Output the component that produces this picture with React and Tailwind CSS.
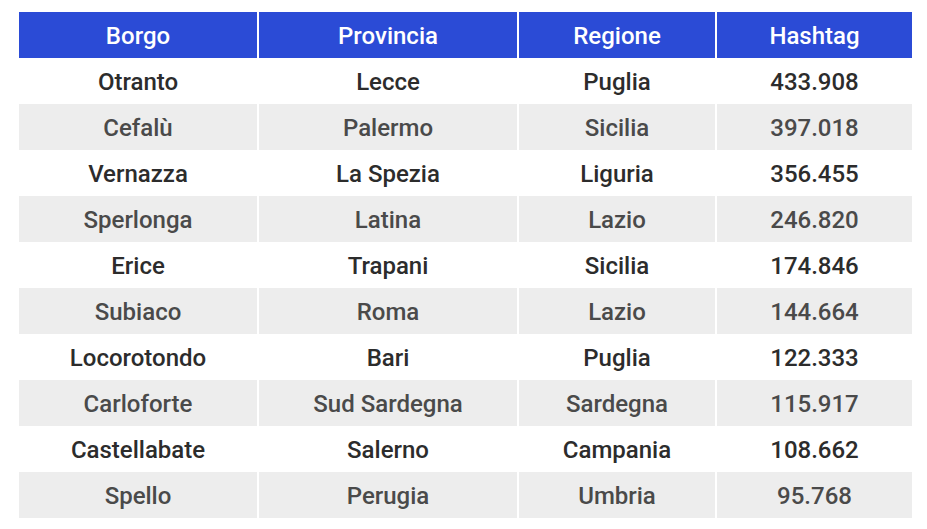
import React from 'react';

const rows = [
  ['Otranto', 'Lecce', 'Puglia', '433.908'],
  ['Cefalù', 'Palermo', 'Sicilia', '397.018'],
  ['Vernazza', 'La Spezia', 'Liguria', '356.455'],
  ['Sperlonga', 'Latina', 'Lazio', '246.820'],
  ['Erice', 'Trapani', 'Sicilia', '174.846'],
  ['Subiaco', 'Roma', 'Lazio', '144.664'],
  ['Locorotondo', 'Bari', 'Puglia', '122.333'],
  ['Carloforte', 'Sud Sardegna', 'Sardegna', '115.917'],
  ['Castellabate', 'Salerno', 'Campania', '108.662'],
  ['Spello', 'Perugia', 'Umbria', '95.768'],
];

const cols = ['w-[238px]', 'w-[258px]', 'w-[196px]', 'w-[195px]'];
const headers = ['Borgo', 'Provincia', 'Regione', 'Hashtag'];

export default function App() {
  return (
    <div className="w-[927px] h-[529px] bg-white pt-[12px] pl-[19px] font-['Roboto',sans-serif]">
      {/* HEADER */}
      <div className="flex gap-[2px]">
        {headers.map((h, i) => (
          <div key={h} className={`${cols[i]} h-[46px] pt-[2px] bg-[#2b4bd6] text-white text-[24px] font-medium flex items-center justify-center`}>
            {h}
          </div>
        ))}
      </div>

      {/* BODY */}
      {rows.map((r, ri) => {
        const odd = ri % 2 === 1;
        return (
          <div key={r[0]} className="flex gap-[2px]">
            {r.map((c, ci) => (
              <div
                key={ci}
                className={`${cols[ci]} h-[46px] pt-[2px] text-[24px] font-medium flex items-center justify-center ${odd ? 'bg-[#ededed] text-[#4a4a4a]' : 'bg-white text-[#2c2c2c]'}`}
              >
                {c}
              </div>
            ))}
          </div>
        );
      })}
    </div>
  );
}
